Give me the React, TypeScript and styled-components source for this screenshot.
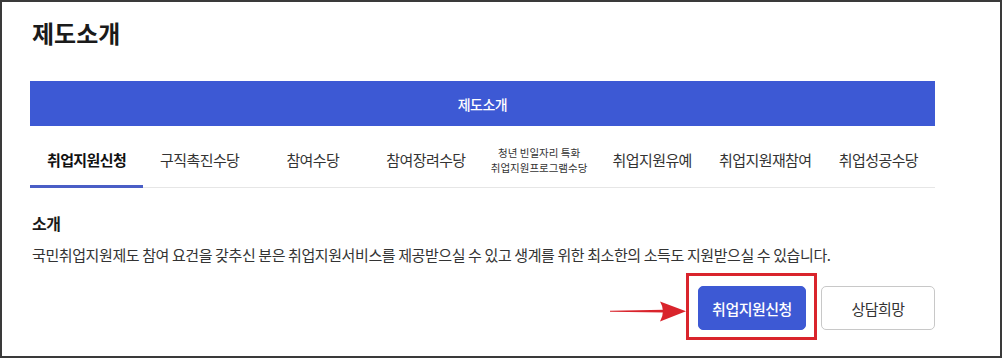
import React from "react";
import styled, { createGlobalStyle } from "styled-components";

const GlobalStyle = createGlobalStyle`
  html, body { margin: 0; padding: 0; background: #fff; }
  body { font-family: "Noto Sans CJK KR", "Noto Sans", sans-serif; color: #222; }
  * { box-sizing: border-box; }
`;

const Frame = styled.div`
  width: 1002px;
  height: 358px;
  border: 2px solid #3a3a3a;
  padding: 15px 0 0 28px;
  overflow: hidden;
`;

const Content = styled.div`
  width: 905px;
  display: flex;
  flex-direction: column;
`;

const PageTitle = styled.h1`
  margin: 0 0 0 2px;
  font-size: 24px;
  line-height: 32px;
  font-weight: 700;
  letter-spacing: 0;
  color: #1a1a1a;
`;

const Banner = styled.div`
  margin-top: 32px;
  height: 45px;
  background: #3d59d4;
  color: #fff;
  display: flex;
  align-items: center;
  justify-content: center;
  font-size: 14px;
  font-weight: 500;
  letter-spacing: -0.5px;
`;

const Tabs = styled.nav`
  margin-top: 8px;
  display: flex;
  border-bottom: 1px solid #e6e6e6;
`;

const Tab = styled.div<{ $active?: boolean }>`
  flex: 1;
  height: 54px;
  display: flex;
  flex-direction: column;
  align-items: center;
  justify-content: center;
  margin-bottom: -1px;
  border-bottom: 3px solid ${(p) => (p.$active ? "#4a5ec6" : "transparent")};
  font-size: 15px;
  letter-spacing: -0.6px;
  font-weight: ${(p) => (p.$active ? 700 : 400)};
  color: ${(p) => (p.$active ? "#111" : "#333")};
  white-space: nowrap;
`;

const SmallLine = styled.span`
  font-size: 10.5px;
  line-height: 15px;
  letter-spacing: 0;
`;

const SectionTitle = styled.h2`
  margin: 23px 0 0 2px;
  font-size: 16px;
  line-height: 24px;
  font-weight: 700;
  letter-spacing: -0.5px;
  color: #1a1a1a;
`;

const Paragraph = styled.p`
  margin: 9px 0 0 2px;
  font-size: 15px;
  line-height: 22px;
  letter-spacing: -0.4px;
  color: #333;
`;

const Actions = styled.div`
  margin-top: 20px;
  display: flex;
  justify-content: flex-end;
  gap: 15px;
`;

const Highlight = styled.div`
  position: relative;
  display: flex;
  &::after {
    content: "";
    position: absolute;
    top: -13px;
    left: -12px;
    right: -11px;
    bottom: -10px;
    border: 3px solid #d9242c;
    pointer-events: none;
  }
`;

const Button = styled.button<{ $primary?: boolean; $w: number }>`
  width: ${(p) => p.$w}px;
  height: 44px;
  border-radius: 5px;
  font-family: inherit;
  font-size: 15px;
  letter-spacing: -0.5px;
  font-weight: ${(p) => (p.$primary ? 500 : 400)};
  background: ${(p) => (p.$primary ? "#3d59d4" : "#fff")};
  color: ${(p) => (p.$primary ? "#fff" : "#333")};
  border: 1px solid ${(p) => (p.$primary ? "#3d59d4" : "#c8c8c8")};
  cursor: pointer;
  padding: 0;
`;

const Arrow = styled.svg`
  position: absolute;
  left: -90px;
  top: 14px;
  width: 79px;
  height: 23px;
  overflow: visible;
`;

const tabs = ["취업지원신청", "구직촉진수당", "참여수당", "참여장려수당", "", "취업지원유예", "취업지원재참여", "취업성공수당"];

export default function App() {
  return (
    <>
      <GlobalStyle />
      <Frame>
        <Content>
          <PageTitle>제도소개</PageTitle>
          <Banner>제도소개</Banner>
          <Tabs>
            {tabs.map((t, i) =>
              i === 4 ? (
                <Tab key={i}>
                  <SmallLine>청년 빈일자리 특화</SmallLine>
                  <SmallLine>취업지원프로그램수당</SmallLine>
                </Tab>
              ) : (
                <Tab key={i} $active={i === 0}>
                  {t}
                </Tab>
              )
            )}
          </Tabs>
          <SectionTitle>소개</SectionTitle>
          <Paragraph>
            국민취업지원제도 참여 요건을 갖추신 분은 취업지원서비스를 제공받으실 수 있고 생계를 위한 최소한의 소득도 지원받으실 수 있습니다.
          </Paragraph>
          <Actions>
            <Highlight>
              <Arrow viewBox="0 0 79 23">
                <path d="M2 10.8 L56 9.8 L56 12.6 L2 11.8 Z" fill="#d9242c" />
                <path d="M52 1.5 L78 11.2 L52 21.5 Q58 11.2 52 1.5 Z" fill="#d9242c" />
              </Arrow>
              <Button $primary $w={108}>취업지원신청</Button>
            </Highlight>
            <Button $w={114}>상담희망</Button>
          </Actions>
        </Content>
      </Frame>
    </>
  );
}
